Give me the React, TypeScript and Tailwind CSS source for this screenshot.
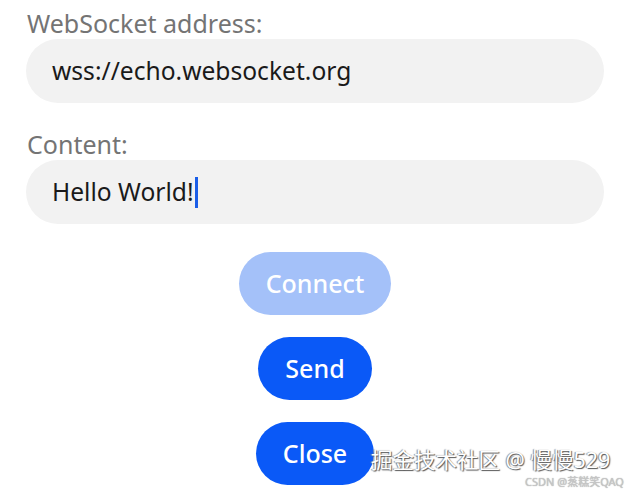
import React from 'react'

function Field({ label, value, caret }: { label: string; value: string; caret?: boolean }) {
    return (
        <div className="flex flex-col">
            <label className="text-[25px] leading-[32px] text-[#747474] pl-[27px]">{label}</label>
            <div className="mx-[26px] h-[64px] rounded-full bg-[#f2f2f2] flex items-center pl-[26px]">
                <span className="text-[24.6px] text-[#1a1a1a] leading-none">{value}</span>
                {caret && <span className="inline-block w-[3px] h-[31px] bg-[#1a5ee8] ml-[1px]"></span>}
            </div>
        </div>
    )
}

export default function App() {
    const buttons = [
        { label: 'Connect', disabled: true },
        { label: 'Send', disabled: false },
        { label: 'Close', disabled: false },
    ]

    return (
        <div
            className="relative w-[630px] h-[489px] bg-white overflow-hidden"
            style={{ fontFamily: '"Noto Sans", "Noto Sans CJK SC", sans-serif' }}>
            <div className="flex flex-col pt-[7px]">
                <Field label="WebSocket address:" value="wss://echo.websocket.org" />
                <div className="h-[25px]"></div>
                <Field label="Content:" value="Hello World!" caret />
            </div>

            {/* Buttons */}
            <div className="flex flex-col items-center gap-[22px] mt-[28px]">
                {buttons.map((b) => (
                    <button
                        key={b.label}
                        className={`h-[63px] px-[27px] rounded-full text-[25px] font-medium text-white ${
                            b.disabled ? 'bg-[#a4c1f9]' : 'bg-[#0a59f7]'
                        }`}>
                        {b.label}
                    </button>
                ))}
            </div>

            {/* Watermark */}
            <span className="absolute left-[371px] top-[449px] text-[21.5px] leading-[22px] text-white [text-shadow:1px_1px_1px_#555,-1px_0_1px_#888]">
                掘金技术社区 @ 慢慢529
            </span>
            <span className="absolute left-[525px] top-[476px] text-[11px] leading-[11px] text-[#c8c8c8] [text-shadow:0_0_1px_#999]">
                CSDN @蒸糕笑QAQ
            </span>
        </div>
    )
}
